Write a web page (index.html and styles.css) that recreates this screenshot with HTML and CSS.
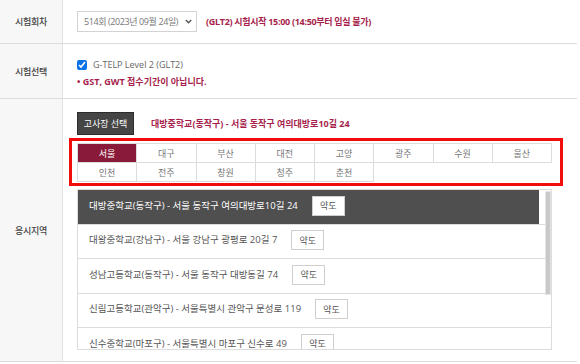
FILE: index.html
```html
<!DOCTYPE html>
<html lang="ko">
<head>
<meta charset="utf-8">
<title>고사장 선택</title>
<link rel="stylesheet" href="styles.css">
</head>
<body>
<div class="form">
  <div class="label">시험회차</div>
  <div class="field field-round">
    <div class="select-wrap">
      <select class="select"><option>514회 (2023년 09월 24일)</option></select>
      <svg class="chev" width="7" height="5" viewBox="0 0 7 5"><path d="M0.8 1 L3.5 3.8 L6.2 1" fill="none" stroke="#555" stroke-width="1.4"/></svg>
    </div>
    <span class="notice">(GLT2) 시험시작 15:00 (14:50부터 입실 불가)</span>
  </div>

  <div class="label">시험선택</div>
  <div class="field field-exam">
    <label class="check"><input type="checkbox" class="checkbox" checked>G-TELP Level 2 (GLT2)</label>
    <p class="warn">• GST, GWT 접수기간이 아닙니다.</p>
  </div>

  <div class="label">응시지역</div>
  <div class="field field-region">
    <div class="pick">
      <button class="btn-dark">고사장 선택</button>
      <span class="notice notice-wide">대방중학교(동작구) - 서울 동작구 여의대방로10길 24</span>
    </div>
    <div class="highlight">
      <div class="regions">
        <span class="cell active">서울</span>
        <span class="cell">대구</span>
        <span class="cell">부산</span>
        <span class="cell">대전</span>
        <span class="cell">고양</span>
        <span class="cell">광주</span>
        <span class="cell">수원</span>
        <span class="cell">울산</span>
        <span class="cell">인천</span>
        <span class="cell">전주</span>
        <span class="cell">창원</span>
        <span class="cell">청주</span>
        <span class="cell">춘천</span>
      </div>
    </div>
    <div class="list-wrap">
      <ul class="list">
        <li class="item active"><span>대방중학교(동작구) - 서울 동작구 여의대방로10길 24</span><button class="btn-map">약도</button></li>
        <li class="item"><span>대왕중학교(강남구) - 서울 강남구 광평로 20길 7</span><button class="btn-map">약도</button></li>
        <li class="item"><span>성남고등학교(동작구) - 서울 동작구 대방동길 74</span><button class="btn-map">약도</button></li>
        <li class="item"><span>신림고등학교(관악구) - 서울특별시 관악구 문성로 119</span><button class="btn-map">약도</button></li>
        <li class="item"><span>신수중학교(마포구) - 서울특별시 마포구 신수로 49</span><button class="btn-map">약도</button></li>
      </ul>
      <div class="thumb"></div>
    </div>
  </div>
</div>
</body>
</html>
```

FILE: styles.css
```css
* { box-sizing: border-box; }

body {
  margin: 0;
  background: #fff;
  font-family: "Open Sans", "Noto Sans CJK KR", sans-serif;
  font-size: 9px;
  color: #666;
}

.form {
  display: grid;
  grid-template-columns: 63px 514px;
  width: 577px;
}

.label {
  background: #f7f7f7;
  border-right: 1px solid #e2e2e2;
  border-bottom: 1px solid #dcdcdc;
  display: flex;
  align-items: center;
  justify-content: center;
  color: #444;
  font-weight: 500;
  font-size: 9px;
  letter-spacing: -0.3px;
}

.field {
  border-bottom: 1px solid #dcdcdc;
  padding-left: 14px;
}

.field-round {
  height: 44px;
  display: flex;
  align-items: center;
  gap: 9px;
  padding-bottom: 1px;
}

.select-wrap {
  position: relative;
  width: 120px;
  height: 21px;
}

.select {
  appearance: none;
  -webkit-appearance: none;
  width: 100%;
  height: 100%;
  margin: 0;
  border: 1px solid #d3d3d3;
  border-radius: 0;
  background: #fff;
  padding: 0 0 0 6px;
  font-family: inherit;
  font-size: 9px;
  letter-spacing: -0.4px;
  color: #777;
}

.chev {
  position: absolute;
  right: 5px;
  top: 8px;
}

.notice {
  color: #a61f4c;
  font-weight: 700;
  font-size: 9px;
  letter-spacing: -0.3px;
}

.notice-wide {
  letter-spacing: 0;
}

.field-exam {
  height: 55px;
  padding-top: 12px;
  line-height: 17px;
}

.check {
  display: flex;
  align-items: center;
  gap: 6px;
  color: #666;
}

.checkbox {
  width: 10px;
  height: 10px;
  margin: 0;
  accent-color: #0a73e8;
}

.warn {
  margin: 0;
  color: #a61f4c;
  font-weight: 700;
}

.field-region {
  height: 263px;
  padding-top: 13px;
}

.pick {
  display: flex;
  align-items: center;
  gap: 17px;
}

.btn-dark {
  width: 57px;
  height: 23px;
  margin: 0;
  padding: 0;
  border: 1px solid #2c2c2c;
  background: #454545;
  color: #fff;
  font-family: inherit;
  font-size: 9px;
}

.highlight {
  margin: 3px 0 0 -8px;
  width: 494px;
  border: 3px solid #f20d0d;
  padding: 2px 8px 1px 5px;
}

.regions {
  display: grid;
  grid-template-columns: repeat(8, 1fr);
  width: 475px;
  border-top: 1px solid #dcdcdc;
  border-left: 1px solid #dcdcdc;
}

.cell {
  height: 19px;
  border-right: 1px solid #dcdcdc;
  border-bottom: 1px solid #dcdcdc;
  display: flex;
  align-items: center;
  justify-content: center;
  color: #777;
  font-size: 9px;
}

.cell.active {
  background: #8a1a3a;
  color: #fff;
}

.list-wrap {
  position: relative;
  margin-top: 3px;
  width: 475px;
  height: 161px;
  border: 1px solid #dcdcdc;
  overflow: hidden;
}

.list {
  list-style: none;
  margin: 0;
  padding: 0;
}

.item {
  height: 34.5px;
  border-bottom: 1px solid #dcdcdc;
  display: flex;
  align-items: center;
  padding: 0 0 2px 11px;
  color: #555;
  font-size: 9.5px;
  line-height: 12px;
}

.item.active {
  background: linear-gradient(90deg, #4f4f4f 0 461px, transparent 461px);
  color: #fff;
}

.btn-map {
  margin: 0 0 0 14px;
  width: 33px;
  height: 20px;
  padding: 0;
  border: 1px solid #cfcfcf;
  background: #fff;
  color: #555;
  font-family: inherit;
  font-size: 9px;
}

.thumb {
  position: absolute;
  right: 0;
  top: 1px;
  width: 6px;
  height: 104px;
  background: #c9c9c9;
  border: 1px solid #e4e4e4;
  border-radius: 1px;
}
```
